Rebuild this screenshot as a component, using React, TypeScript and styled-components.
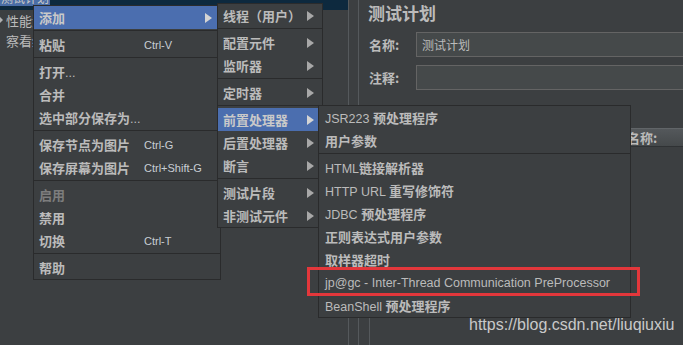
import React from "react";
import styled, { createGlobalStyle } from "styled-components";

const HAN = `"Noto Sans CJK SC", "Noto Sans CJK JP", sans-serif`;

const GlobalStyle = createGlobalStyle`
  html, body {
    margin: 0;
    padding: 0;
    background: #3c3f41;
  }
  body {
    font-family: "Liberation Sans", "Noto Sans CJK SC", sans-serif;
  }
`;

type Entry =
  | { sep: true }
  | {
      sep?: false;
      label: string;
      shortcut?: string;
      arrow?: boolean;
      active?: boolean;
      disabled?: boolean;
    };

const SEP: Entry = { sep: true };

const editMenu: Entry[] = [
  { label: "添加", arrow: true, active: true },
  SEP,
  { label: "粘贴", shortcut: "Ctrl-V" },
  SEP,
  { label: "打开..." },
  { label: "合并" },
  { label: "选中部分保存为..." },
  SEP,
  { label: "保存节点为图片", shortcut: "Ctrl-G" },
  { label: "保存屏幕为图片", shortcut: "Ctrl+Shift-G" },
  SEP,
  { label: "启用", disabled: true },
  { label: "禁用" },
  { label: "切换", shortcut: "Ctrl-T" },
  SEP,
  { label: "帮助" },
];

const addMenu: Entry[] = [
  { label: "线程（用户）", arrow: true },
  SEP,
  { label: "配置元件", arrow: true },
  { label: "监听器", arrow: true },
  SEP,
  { label: "定时器", arrow: true },
  SEP,
  { label: "前置处理器", arrow: true, active: true },
  { label: "后置处理器", arrow: true },
  { label: "断言", arrow: true },
  SEP,
  { label: "测试片段", arrow: true },
  { label: "非测试元件", arrow: true },
];

const preMenu: Entry[] = [
  { label: "JSR223 预处理程序" },
  { label: "用户参数" },
  SEP,
  { label: "HTML链接解析器" },
  { label: "HTTP URL 重写修饰符" },
  { label: "JDBC 预处理程序" },
  { label: "正则表达式用户参数" },
  { label: "取样器超时" },
  { label: "jp@gc - Inter-Thread Communication PreProcessor" },
  { label: "BeanShell 预处理程序" },
];

function Mixed({ text }: { text: string }) {
  const parts = text.split(/([\u3000-\u9fff\uff00-\uffef]+)/);
  return (
    <>
      {parts.map((p, i) => (i % 2 ? <Han key={i}>{p}</Han> : p))}
    </>
  );
}

type MenuProps = {
  items: Entry[];
  x: number;
  y: number;
  width: number;
  layer: number;
  pad: number;
  labelWidth?: number;
};

function PopupMenu(props: MenuProps) {
  return (
    <Menu $x={props.x} $y={props.y} $w={props.width} $z={props.layer}>
      {props.items.map((it, i) =>
        it.sep ? (
          <Separator key={i} />
        ) : (
          <Item key={i} $pad={props.pad} $active={it.active} $disabled={it.disabled}>
            <Label $w={props.labelWidth}>
              <Mixed text={it.label} />
            </Label>
            {it.shortcut && <Shortcut>{it.shortcut}</Shortcut>}
            {it.arrow && <Arrow $active={it.active} />}
          </Item>
        )
      )}
    </Menu>
  );
}

export default function App() {
  return (
    <>
      <GlobalStyle />
      <Screen>
        <TreePanel>
          <SelectedRow>
            <SelectedLabel>测试计划</SelectedLabel>
          </SelectedRow>
          <TreeRow>
            <Toggle />
            性能测试计划
          </TreeRow>
          <TreeRow>
            <Toggle $hidden />
            察看结果树
          </TreeRow>
        </TreePanel>
        <Splitter />
        <RightPanel>
          <Title>测试计划</Title>
          <FormRow>
            <FieldLabel>名称:</FieldLabel>
            <Field>测试计划</Field>
          </FormRow>
          <FormRow>
            <FieldLabel>注释:</FieldLabel>
            <Field />
          </FormRow>
          <GroupBox>
            <TableHeader>名称:</TableHeader>
          </GroupBox>
        </RightPanel>

        <PopupMenu items={editMenu} x={33} y={5} width={188} layer={1} pad={5} labelWidth={105} />
        <PopupMenu items={addMenu} x={217} y={3} width={106} layer={2} pad={5} />
        <PopupMenu items={preMenu} x={318} y={105} width={313} layer={3} pad={6} />

        <Highlight />
        <Watermark>https://blog.csdn.net/liuqiuxiu</Watermark>
      </Screen>
    </>
  );
}

const Screen = styled.div`
  position: relative;
  width: 683px;
  height: 345px;
  overflow: hidden;
  display: flex;
  background: #3c3f41;
  color: #bbbbbb;
`;

const TreePanel = styled.div`
  width: 349px;
  flex: none;
  box-sizing: border-box;
  border-right: 1px solid #55595c;
  display: flex;
  flex-direction: column;
`;

const SelectedRow = styled.div`
  height: 10px;
  background: #0d293e;
  overflow: hidden;
  display: flex;
  align-items: flex-start;
`;

const SelectedLabel = styled.span`
  margin-top: -10px;
  height: 16px;
  line-height: 16px;
  padding: 0 1px;
  background: #4a6da6;
  color: #c8c8c8;
  font-family: ${HAN};
  font-size: 12px;
`;

const TreeRow = styled.div`
  height: 20px;
  display: flex;
  align-items: center;
  white-space: nowrap;
  font-family: ${HAN};
  font-size: 13px;
  color: #bbbbbb;
`;

const Toggle = styled.span<{ $hidden?: boolean }>`
  width: 0;
  height: 0;
  margin-right: 3px;
  border-left: 3px solid ${(p) => (p.$hidden ? "transparent" : "#b0b0b0")};
  border-top: 3px solid transparent;
  border-bottom: 3px solid transparent;
`;

const Splitter = styled.div`
  width: 10px;
  flex: none;
  box-sizing: border-box;
  border-right: 1px solid #55595c;
`;

const RightPanel = styled.div`
  flex: 1;
  min-width: 0;
  padding-left: 9px;
  display: flex;
  flex-direction: column;
`;

const Title = styled.div`
  height: 25px;
  line-height: 25px;
  font-family: ${HAN};
  font-size: 17px;
  font-weight: 700;
  color: #bbbbbb;
`;

const FormRow = styled.div`
  height: 25px;
  margin-top: 7px;
  display: flex;
  align-items: center;
  & + & {
    margin-top: 8px;
  }
`;

const FieldLabel = styled.div`
  width: 48px;
  flex: none;
  padding-left: 1px;
  box-sizing: border-box;
  font-family: ${HAN};
  font-size: 13px;
  font-weight: 700;
  color: #bbbbbb;
`;

const Field = styled.div`
  flex: 1;
  height: 25px;
  margin-right: -20px;
  box-sizing: border-box;
  border: 1px solid #646464;
  background: #45494a;
  padding-left: 5px;
  line-height: 23px;
  font-family: ${HAN};
  font-size: 12px;
  color: #bbbbbb;
`;

const GroupBox = styled.div`
  flex: 1;
  margin-top: 22px;
  margin-left: 1px;
  padding-top: 16px;
  border-left: 1px solid #55595c;
`;

const TableHeader = styled.div`
  height: 19px;
  box-sizing: border-box;
  margin-right: -20px;
  border-top: 1px solid #616568;
  border-bottom: 1px solid #2f3234;
  background: linear-gradient(#54585b, #45494b);
  padding-left: 257px;
  line-height: 17px;
  font-family: ${HAN};
  font-size: 13px;
  font-weight: 700;
  color: #bbbbbb;
`;

const Menu = styled.div<{ $x: number; $y: number; $w: number; $z: number }>`
  position: absolute;
  left: ${(p) => p.$x}px;
  top: ${(p) => p.$y}px;
  width: ${(p) => p.$w}px;
  z-index: ${(p) => p.$z};
  box-sizing: border-box;
  border: 1px solid #2a2b2c;
  background: #3c3f41;
  display: flex;
  flex-direction: column;
`;

const Item = styled.div<{ $pad: number; $active?: boolean; $disabled?: boolean }>`
  height: 23px;
  flex: none;
  display: flex;
  align-items: center;
  padding: 0 8px 0 ${(p) => p.$pad}px;
  background: ${(p) => (p.$active ? "#4b6eaf" : "transparent")};
  color: ${(p) => (p.$disabled ? "#7d7d7d" : p.$active ? "#c9c9c9" : "#bbbbbb")};
  font-size: 12.5px;
  white-space: nowrap;
`;

const Label = styled.span<{ $w?: number }>`
  flex: none;
  width: ${(p) => (p.$w ? `${p.$w}px` : "auto")};
`;

const Han = styled.span`
  font-family: ${HAN};
  font-size: 13px;
  font-weight: 700;
`;

const Shortcut = styled.span`
  font-size: 11px;
  color: #c8ced4;
`;

const Separator = styled.div`
  height: 1px;
  flex: none;
  margin: 1px 0 2px;
  background: #2a2b2c;
`;

const Arrow = styled.span<{ $active?: boolean }>`
  margin-left: auto;
  width: 0;
  height: 0;
  border-left: 7px solid ${(p) => (p.$active ? "#d4d4d4" : "#a8a8a8")};
  border-top: 5px solid transparent;
  border-bottom: 5px solid transparent;
`;

const Highlight = styled.div`
  position: absolute;
  left: 307px;
  top: 267px;
  width: 333px;
  height: 29px;
  box-sizing: border-box;
  border: 3px solid #e3373b;
  z-index: 4;
`;

const Watermark = styled.div`
  position: absolute;
  left: 469px;
  top: 315px;
  z-index: 5;
  font-family: "Liberation Sans", sans-serif;
  font-size: 16px;
  line-height: 20px;
  color: #c9c9c9;
  white-space: nowrap;
`;
